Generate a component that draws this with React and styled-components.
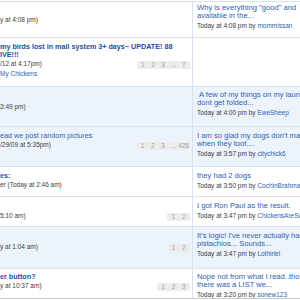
import React from 'react';
import styled, { createGlobalStyle } from 'styled-components';

const GlobalStyle = createGlobalStyle`
  body {
    margin: 0;
    background: #fff;
    overflow: hidden;
    font-family: 'Liberation Sans', Arial, sans-serif;
  }
`;

const List = styled.div`
  width: 300px;
  margin-top: 1px;
  border-top: 1px solid #d7e1ef;
  border-bottom: 1px solid #c9c9c9;
`;

const Row = styled.div`
  display: grid;
  grid-template-columns: 193px 1fr;
  height: ${(p) => p.h}px;
  background: ${(p) => (p.alt ? '#edf3fb' : '#fff')};
  border-bottom: ${(p) => (p.last ? 'none' : '1px solid #d7e1ef')};
  overflow: hidden;
`;

const Main = styled.div`
  border-right: 1px solid #d7e1ef;
  padding: ${(p) => p.pt}px 2px 0 0;
  overflow: hidden;
  display: flex;
  flex-direction: column;
`;

const Title = styled.div`
  font-size: 7.2px;
  line-height: 8px;
  font-weight: ${(p) => (p.bold ? 700 : 400)};
  color: ${(p) => (p.bold ? '#1c4d9c' : '#2d62b1')};
  white-space: nowrap;
`;

const MetaRow = styled.div`
  display: flex;
  align-items: flex-end;
  justify-content: space-between;
  height: 10px;
`;

const Meta = styled.div`
  font-size: 6.5px;
  line-height: 10px;
  color: #3c3c3c;
  white-space: nowrap;
  align-self: center;
`;

const Forum = styled.div`
  font-size: 6.5px;
  line-height: 10px;
  color: #2d62b1;
  white-space: nowrap;
`;

const PageNav = styled.div`
  display: flex;
  background: #ececec;
  border-radius: 2px;
  height: 8px;
  padding: 0 1px;
`;

const PageNum = styled.span`
  min-width: 10.3px;
  text-align: center;
  font-size: 6.3px;
  line-height: 8px;
  color: #a0a0a0;
`;

const Last = styled.div`
  padding: ${(p) => p.pt}px 0 0 4px;
  overflow: hidden;
`;

const LastTitle = styled.div`
  font-size: 7.6px;
  line-height: 8px;
  color: #2d62b1;
  white-space: nowrap;
`;

const LastMeta = styled.div`
  margin-top: 1px;
  font-size: 6.5px;
  line-height: 10px;
  color: #3c3c3c;
  white-space: nowrap;

  a {
    color: #2d62b1;
    text-decoration: none;
  }
`;

const Pages = ({ items }) => (
  <PageNav>
    {items.map((n, i) => (
      <PageNum key={i}>{n}</PageNum>
    ))}
  </PageNav>
);

const rows = [
  {
    h: 35,
    mainPt: 13,
    meta: 'y at 4:08 pm)',
    lastPt: 2,
    last: ['Why is everything "good" and', 'available in the...'],
    time: '4:08 pm',
    user: 'mommissan',
  },
  {
    h: 48,
    mainPt: 5,
    title: ['my birds lost in mail system 3+ days~ UPDATE! 88', 'IVE!!!'],
    bold: true,
    meta: '/12 at 4:17pm)',
    forum: 'My Chickens',
    pages: ['1', '2', '3', '...', '7'],
  },
  {
    h: 39,
    alt: true,
    mainPt: 15,
    meta: '3:49 pm)',
    lastPt: 4,
    last: ['\u00a0A few of my things on my laundry', 'dont get folded...'],
    time: '4:00 pm',
    user: 'EweSheep',
  },
  {
    h: 39,
    alt: true,
    mainPt: 5,
    title: ['ead we post random pictures'],
    meta: '/29/09 at 5:35pm)',
    pages: ['1', '2', '3', '...', '426'],
    lastPt: 5,
    last: ["I am so glad my dogs don't ma", 'when they toot....'],
    time: '3:57 pm',
    user: 'citychick6',
  },
  {
    h: 29,
    mainPt: 5,
    title: ['es:'],
    bold: true,
    meta: 'er (Today at 2:46 am)',
    lastPt: 5,
    last: ['they had 2 dogs'],
    time: '3:50 pm',
    user: 'CochinBrahma',
  },
  {
    h: 29,
    mainPt: 14,
    meta: '5:10 am)',
    pages: ['1', '2'],
    lastPt: 5,
    last: ['I got Ron Paul as the result.'],
    time: '3:47 pm',
    user: 'ChickensAreSweet',
  },
  {
    h: 41,
    alt: true,
    mainPt: 15,
    meta: 'y at 1:04 am)',
    pages: ['1', '2'],
    lastPt: 5,
    last: ["It's logic!   I've never actually had", 'pistachios... Sounds...'],
    time: '3:47 pm',
    user: 'Lothiriel',
  },
  {
    h: 29,
    mainPt: 4,
    title: ['er button?'],
    bold: true,
    meta: 'y at 10:37 am)',
    pages: ['1', '2', '3'],
    lastPt: 4,
    last: ['Nope not from what I read..tho', 'there was a LIST we...'],
    time: '3:20 pm',
    user: 'sonew123',
    end: true,
  },
];

const App = () => {
  return (
    <>
      <GlobalStyle />
      <List>
        {rows.map((r, i) => (
          <Row key={i} h={r.h} alt={r.alt} last={r.end}>
            <Main pt={r.mainPt}>
              {r.title &&
                r.title.map((t, j) => (
                  <Title key={j} bold={r.bold}>
                    {t}
                  </Title>
                ))}
              <MetaRow>
                <Meta>{r.meta}</Meta>
                {r.pages && <Pages items={r.pages} />}
              </MetaRow>
              {r.forum && <Forum>{r.forum}</Forum>}
            </Main>
            <Last pt={r.lastPt}>
              {r.last && (
                <>
                  {r.last.map((t, j) => (
                    <LastTitle key={j}>{t}</LastTitle>
                  ))}
                  <LastMeta>
                    Today at {r.time} by <a>{r.user}</a>
                  </LastMeta>
                </>
              )}
            </Last>
          </Row>
        ))}
      </List>
    </>
  );
};

export default App;
